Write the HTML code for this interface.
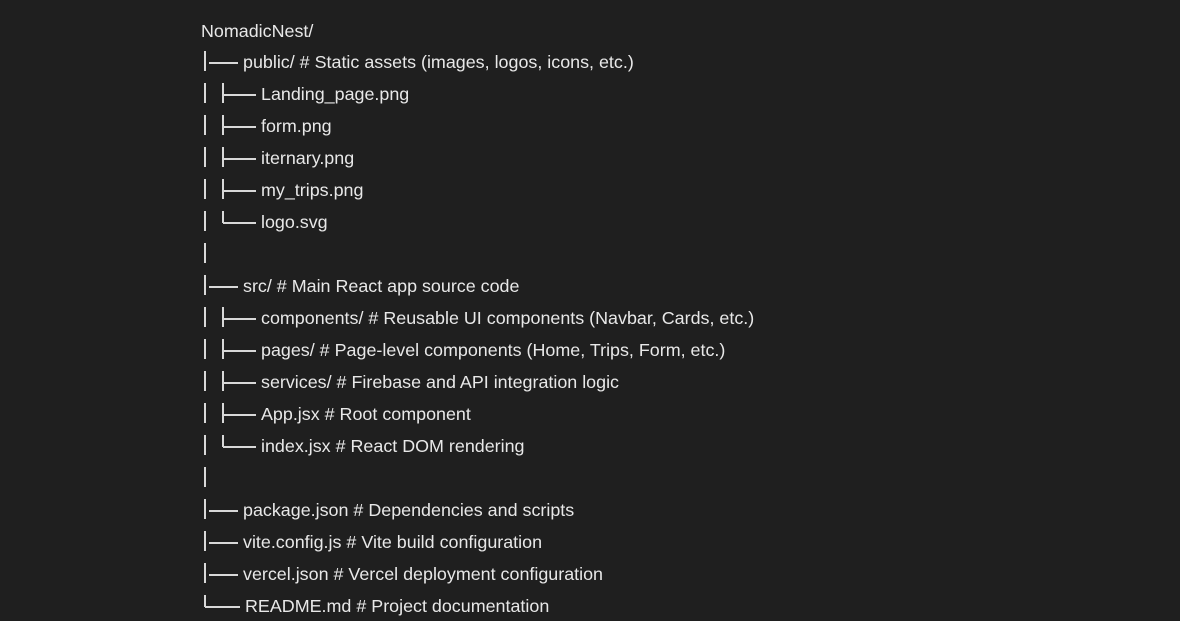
<!DOCTYPE html>
<html><head><meta charset="utf-8"><style>
body{margin:0;width:1180px;height:621px;background:#1f1f1f;overflow:hidden;position:relative;font-family:"Liberation Sans",sans-serif;color:#e8e8e8;}
.t{position:absolute;font-size:17.9px;line-height:20px;white-space:nowrap;}
.v{position:absolute;width:2px;height:20px;background:#d8d8d8;}
.h{position:absolute;height:1.5px;background:#d8d8d8;}
</style></head><body>
<div id="c"></div>
<script>
const rows=[
[0,"NomadicNest/",31],
[1,"public/ # Static assets (images, logos, icons, etc.)",62,'m'],
[2,"Landing_page.png",94,'m'],
[2,"form.png",126,'m'],
[2,"iternary.png",158,'m'],
[2,"my_trips.png",190,'m'],
[2,"logo.svg",222,'l'],
[9,"",254],
[1,"src/ # Main React app source code",286,'m'],
[2,"components/ # Reusable UI components (Navbar, Cards, etc.)",318,'m'],
[2,"pages/ # Page-level components (Home, Trips, Form, etc.)",350,'m'],
[2,"services/ # Firebase and API integration logic",382,'m'],
[2,"App.jsx # Root component",414,'m'],
[2,"index.jsx # React DOM rendering",446,'l'],
[9,"",478],
[1,"package.json # Dependencies and scripts",510,'m'],
[1,"vite.config.js # Vite build configuration",542,'m'],
[1,"vercel.json # Vercel deployment configuration",574,'m'],
[3,"README.md # Project documentation",606,'l']];
let h='';
for(const [lv,tx,y,k] of rows){
 const ty=y-10;
 if(lv==0){h+=`<div class="t" style="left:201px;top:${ty}px">${tx}</div>`;continue;}
 if(lv==9){h+=`<div class="v" style="left:204px;top:${y-11}px"></div>`;continue;}
 if(lv==1){h+=`<div class="v" style="left:204px;top:${y-11}px"></div><div class="h" style="left:209px;width:29px;top:${y}px"></div><div class="t" style="left:243px;top:${ty}px">${tx}</div>`;}
 if(lv==2){h+=`<div class="v" style="left:204px;top:${y-11}px"></div><div class="v" style="left:222px;top:${y-11}px;height:${k=='l'?12:20}px"></div><div class="h" style="left:223px;width:33px;top:${y}px"></div><div class="t" style="left:261px;top:${ty}px">${tx}</div>`;}
 if(lv==3){h+=`<div class="v" style="left:204px;top:${y-11}px;height:12px"></div><div class="h" style="left:205px;width:35px;top:${y}px"></div><div class="t" style="left:245px;top:${ty}px">${tx}</div>`;}
}
document.getElementById('c').innerHTML=h;
</script>
</body></html>
